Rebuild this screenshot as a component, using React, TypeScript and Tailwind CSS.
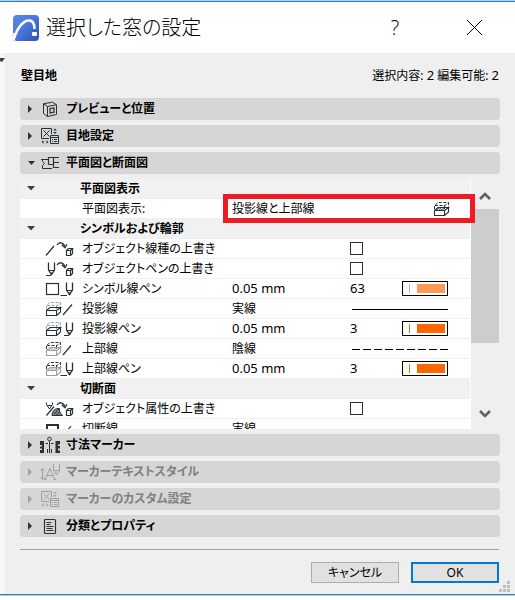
import React from 'react';
import clsx from 'clsx';

const INK = '#263238';
const FAINT = '#9aa0a3';

/* ---------- small glyphs shared by the row icons ---------- */

const Slash = ({ x = 0 }: { x?: number }) => (
  <path d={`M${x + 2} 14.5L${x + 10} 5`} stroke={INK} strokeWidth="1.2" />
);

const Pen = ({ x = 0, wide = false }: { x?: number; wide?: boolean }) => (
  <g transform={`translate(${x} 0)`} stroke={INK}>
    <path d="M4.5 1.5V9L7.5 13.5L10.5 9V1.5" strokeWidth="1.3" />
    <path d="M5 9.5H10" />
    <path d="M6.5 12.5H8.5" strokeWidth="2" />
    <path d={wide ? 'M-1.5 14.5H5' : 'M2 14.5H7'} />
  </g>
);

const ArrowToCube = () => (
  <g stroke={INK}>
    <path d="M13 4C15 .8 19.5 .8 20.8 5.5" strokeWidth="1.3" />
    <path d="M17.8 3.8L21 6.8L23 3.2" strokeWidth="1.3" />
    <path d="M22.5 9.5H26.5V14.5H22.5ZM22.5 9.5L24.5 7.5H28.5L26.5 9.5M28.5 7.5V12.5L26.5 14.5" strokeWidth="1.2" />
  </g>
);

const Box = ({ top, bottom, hatch = false }: { top: string; bottom: string; hatch?: boolean }) => (
  <g>
    <path d="M2.5 8V4.5L6 1.5H16.5V6" stroke={top} strokeDasharray="3 1.5" />
    <path d="M3 4.5H13L16.5 1.5M12.5 5V8" stroke={top} strokeDasharray="3 1.5" />
    <path d="M2.5 9.5H12.5V14.5H2.5ZM2.5 9.5L6 6.5H16.5L12.5 9.5M16.5 6.5V11L12.5 14.5" stroke={bottom} strokeWidth="1.1" />
    {hatch && <path d="M4.5 9L7.5 6.5L9.5 9L12 6.5M7 9L9 6.5M10.5 9L13 6.5" stroke={bottom} strokeWidth="0.8" />}
  </g>
);

type RowIconName =
  | 'lineOverride'
  | 'penOverride'
  | 'symbolPen'
  | 'projLine'
  | 'projPen'
  | 'overLine'
  | 'overPen'
  | 'cutOverride'
  | 'cutLine';

const ROW_ICONS: Record<RowIconName, React.ReactNode> = {
  lineOverride: <><Slash /><ArrowToCube /></>,
  penOverride: <><Pen /><ArrowToCube /></>,
  symbolPen: <><rect x="2.5" y="2.5" width="12" height="11" stroke={INK} strokeWidth="1.2" /><Pen x={18} wide /></>,
  projLine: <><Box top={FAINT} bottom={INK} /><path d="M19 14L28 3.5" stroke={INK} strokeWidth="1.2" /></>,
  projPen: <><Box top={FAINT} bottom={INK} /><Pen x={18} /></>,
  overLine: <><Box top={INK} bottom={FAINT} hatch /><path d="M19 14L27 4.5" stroke={INK} strokeWidth="1.2" /></>,
  overPen: <><Box top={INK} bottom={FAINT} hatch /><Pen x={18} wide /></>,
  cutOverride: (
    <>
      <path d="M2.5 1.5V3.5L5.5 8L8.5 3.5V1.5M3 4.5H8" stroke={INK} />
      <path d="M2.5 14.5L10 5.5" stroke={INK} strokeWidth="1.2" />
      <path d="M8 14.5C8 10 11 7 15.5 7.5C15 10 16 12 18.5 14.5Z" fill="#7c8386" stroke={INK} />
      <path d="M10 13L15 8M12.5 14L15.5 11" stroke={INK} />
      <ArrowToCube />
    </>
  ),
  cutLine: <><rect x="3" y="4" width="11" height="11" stroke={INK} strokeWidth="2" /><path d="M19 15L27 5" stroke={INK} strokeWidth="1.2" /></>,
};

const RowIcon = ({ name }: { name: RowIconName }) => (
  <svg width="30" height="16" viewBox="0 0 30 16" fill="none" className="ml-6 block" aria-hidden="true">
    {ROW_ICONS[name]}
  </svg>
);

/* ---------- panel header icons ---------- */

type PanelIconName = 'preview' | 'settings' | 'plan' | 'dimension' | 'textStyle' | 'document';

const PANEL_ICONS: Record<PanelIconName, React.ReactNode> = {
  preview: (
    <>
      <path d="M7.5 6.5L16.5 4.8V14.5L7.5 16.5ZM7.5 6.5L3.5 3.8L12.5 2.2L16.5 4.8M3.5 3.8V13.5L7.5 16.5" />
      <path d="M10 8.7L14 7.9V12.2L10 13.1Z" strokeWidth="1.2" />
    </>
  ),
  settings: (
    <>
      <path d="M9 11.5H1.5V1.5H11.5V7M3.5 3.5L9.5 9.5M9.5 3.5L3.5 9.5" />
      <path d="M10.5 8.5H18.5V16.5H10.5ZM10.5 10.5H18.5M12 12.5H13M14 12.5H17M12 14.5H13M14 14.5H17" />
      <path d="M13.2 3.5L15 1.5L16.8 3.5ZM13.2 5L15 7L16.8 5ZM3.5 13.2L1.5 15L3.5 16.8ZM6.5 13.2L8.5 15L6.5 16.8Z" fill="currentColor" stroke="none" />
    </>
  ),
  plan: (
    <>
      <path d="M1 5.500H8M2.500 5.500V7.500L4.500 9.500L2.500 11.500V14.500H12" />
      <path d="M8.500 10.500V3.500H19M8.500 10.500H13.500M13.500 3.500V13.500H19M13.500 8.500H19" strokeWidth="1.2" />
    </>
  ),
  dimension: (
    <>
      <path d="M0 5H4V17H0V14H2V12.5H0V10.5H2V9H0ZM20 5H15.5V17H20V14.5H18V12.5H20V10H18V8.5H20Z" fill="currentColor" stroke="none" />
      <circle cx="9.5" cy="3" r="1.8" />
      <path d="M9.5 5V17M5.5 7.5H8M11 7.5H13.5M7.5 13V17M11.5 13V17" />
    </>
  ),
  textStyle: (
    <>
      <path d="M2.5 6V16M0.5 7.5L2.5 5.5L4.5 7.5M0.5 14.5L2.5 16.5L4.5 14.5" />
      <path d="M5 16.5L10 5.5L15 16.5M7 12.5H13M4 16.5H6.5M13.5 16.5H16" />
      <path d="M13.5 1V7L16.5 12L19.5 7V1M14 7.5H19" />
    </>
  ),
  document: (
    <>
      <rect x="4.5" y="2.5" width="11" height="14" rx="1" strokeWidth="1.2" />
      <path d="M6.5 5.5H11.5M6.5 7.5H10.5M6.5 9.5H13.5M6.5 11.5H12.5M6.5 13.5H13.5" />
    </>
  ),
};

interface PanelHeaderProps {
  icon: PanelIconName;
  title: string;
  open?: boolean;
  disabled?: boolean;
}

const PanelHeader = ({ icon, title, open = false, disabled = false }: PanelHeaderProps) => (
  <button
    type="button"
    disabled={disabled}
    aria-expanded={open}
    className={clsx(
      'flex h-[22px] w-full items-center rounded-sm bg-[#d6d6d6] pl-2 text-left',
      disabled ? 'text-[#a0a0a0]' : 'text-[#263238]',
    )}
  >
    <svg width="7" height="8" viewBox="0 0 7 8" fill="currentColor" aria-hidden="true">
      {open ? <path d="M0 2H7L3.5 6Z" /> : <path d="M0 0L4 4L0 8Z" />}
    </svg>
    <svg
      width="20"
      height="18"
      viewBox="0 0 20 18"
      fill="none"
      stroke="currentColor"
      className="ml-[5px]"
      aria-hidden="true"
    >
      {PANEL_ICONS[icon]}
    </svg>
    <span className={clsx('ml-[6px] font-bold', disabled ? 'text-[#808080]' : 'text-black')}>{title}</span>
  </button>
);

/* ---------- property table ---------- */

type Row =
  | { kind: 'group'; label: string }
  | { kind: 'choice'; label: string; value: string }
  | { kind: 'check'; label: string; icon: RowIconName }
  | { kind: 'pen'; label: string; icon: RowIconName; value: string; pen: number }
  | { kind: 'line'; label: string; icon: RowIconName; value: string; dashed?: boolean };

const ROWS: Row[] = [
  { kind: 'group', label: '平面図表示' },
  { kind: 'choice', label: '平面図表示:', value: '投影線と上部線' },
  { kind: 'group', label: 'シンボルおよび輪郭' },
  { kind: 'check', label: 'オブジェクト線種の上書き', icon: 'lineOverride' },
  { kind: 'check', label: 'オブジェクトペンの上書き', icon: 'penOverride' },
  { kind: 'pen', label: 'シンボル線ペン', icon: 'symbolPen', value: '0.05 mm', pen: 63 },
  { kind: 'line', label: '投影線', icon: 'projLine', value: '実線' },
  { kind: 'pen', label: '投影線ペン', icon: 'projPen', value: '0.05 mm', pen: 3 },
  { kind: 'line', label: '上部線', icon: 'overLine', value: '陰線', dashed: true },
  { kind: 'pen', label: '上部線ペン', icon: 'overPen', value: '0.05 mm', pen: 3 },
  { kind: 'group', label: '切断面' },
  { kind: 'check', label: 'オブジェクト属性の上書き', icon: 'cutOverride' },
  { kind: 'line', label: '切断線', icon: 'cutLine', value: '実線' },
];

const Swatch = ({ light }: { light: boolean }) => (
  <div className="flex h-[15px] w-[46px] items-center border border-black bg-white pl-[6px]">
    <span className={clsx('h-[9px] w-px', light ? 'bg-[#ff9955]' : 'bg-[#ff6600]')} />
    <span className={clsx('ml-[7px] h-[9px] w-7', light ? 'bg-[#ff9955]' : 'bg-[#ff6600]')} />
  </div>
);

const PropertyRow = ({ row }: { row: Row }) => {
  const cell = 'h-5 border-b border-[#efefef] p-0 text-left align-middle font-normal whitespace-nowrap';

  if (row.kind === 'group') {
    return (
      <tr className="bg-[#f1f1f1]">
        <td className={cell}>
          <svg width="8" height="5" viewBox="0 0 8 5" className="ml-[7px] block" aria-hidden="true">
            <path d="M0 0H8L4 4.5Z" fill="#404040" />
          </svg>
        </td>
        <th colSpan={4} scope="colgroup" className="h-5 border-b border-[#efefef] p-0 text-left align-middle font-bold">
          {row.label}
        </th>
      </tr>
    );
  }

  return (
    <tr>
      <td className={cell}>{'icon' in row && <RowIcon name={row.icon} />}</td>
      <th scope="row" className={clsx(cell, 'pl-[2px]')}>{row.label}</th>
      <td className={cell}>
        {row.kind === 'pen' ? <span className="text-[13px]">{row.value}</span> : 'value' in row && row.value}
      </td>
      {row.kind === 'check' && (
        <td className={cell} colSpan={2}>
          <input
            type="checkbox"
            aria-label={row.label}
            className="block size-[13px] appearance-none border border-[#263238] bg-white checked:bg-[#263238]"
          />
        </td>
      )}
      {row.kind === 'choice' && (
        <td className={cell} colSpan={2}>
          <svg width="18" height="16" viewBox="0 0 18 16" fill="none" className="mr-[20px] ml-auto block" aria-hidden="true">
            <Box top={INK} bottom={INK} hatch />
          </svg>
        </td>
      )}
      {row.kind === 'line' && (
        <td className={cell} colSpan={2}>
          <svg width="96" height="5" viewBox="0 0 96 5" className="ml-[2px] block" aria-hidden="true">
            <path d="M0 3.5H96" stroke="#000" strokeDasharray={row.dashed ? '8 3' : undefined} />
          </svg>
        </td>
      )}
      {row.kind === 'pen' && (
        <>
          <td className={cell}>
            <span className="text-[13px]">{row.pen}</span>
          </td>
          <td className={cell}>
            <Swatch light={row.pen === 63} />
          </td>
        </>
      )}
    </tr>
  );
};

const PropertyPanel = () => (
  <div className="relative mt-[5px] flex h-[250px]">
    <div className="grow overflow-hidden border-r border-white bg-white">
      <table className="w-full table-fixed border-separate border-spacing-0">
        <colgroup>
          <col className="w-[60px]" />
          <col className="w-[152px]" />
          <col />
          <col className="w-[52px]" />
          <col className="w-[68px]" />
        </colgroup>
        <tbody>
          {ROWS.map((row, i) => (
            <PropertyRow key={i} row={row} />
          ))}
        </tbody>
      </table>
    </div>

    {/* Scroll bar */}
    <div className="flex w-[29px] shrink-0 flex-col pr-px">
      <button type="button" aria-label="上へスクロール" className="flex h-[30px] items-center justify-center pt-1">
        <svg width="12" height="10" viewBox="0 0 12 10" fill="none" aria-hidden="true">
          <path d="M1 8L6 3L11 8" stroke="#606060" strokeWidth="2.6" />
        </svg>
      </button>
      <div className="grow">
        <div className="h-[134px] bg-[#cdcdcd]" />
      </div>
      <button type="button" aria-label="下へスクロール" className="flex h-[30px] items-center justify-center">
        <svg width="12" height="10" viewBox="0 0 12 10" fill="none" aria-hidden="true">
          <path d="M1 2L6 7L11 2" stroke="#606060" strokeWidth="2.6" />
        </svg>
      </button>
    </div>

    {/* Red callout round the display option */}
    <div className="pointer-events-none absolute top-[15px] right-[25px] left-[203px] h-[29px] border-5 border-[#ed1c24]" />
  </div>
);

/* ---------- dialog ---------- */

const AppLogo = () => (
  <svg width="28" height="28" viewBox="0 0 28 28" className="block" aria-hidden="true">
    <defs>
      <linearGradient id="logo" x1="0" y1="0" x2="1" y2="1">
        <stop offset="0" stopColor="#5d8ae2" />
        <stop offset="0.5" stopColor="#4a74dc" />
        <stop offset="1" stopColor="#2c4fae" />
      </linearGradient>
    </defs>
    <rect x="1" y="1" width="26" height="26" rx="4" fill="url(#logo)" />
    <path d="M0 19H4L1.500 28H0Z" fill="#e6ebf6" />
    <path d="M1.500 26C5 14 11 6.500 17 6.500C21 6.500 22.500 9 22.500 15" fill="none" stroke="#fff" strokeWidth="2.6" />
    <rect x="20" y="18" width="5" height="4" rx="1" fill="#fff" />
  </svg>
);

const TitleBar = () => (
  <header className="flex h-[51px] items-center bg-white pl-3">
    <AppLogo />
    <h1 className="ml-[6px] grow text-[20px] leading-7 font-light">選択した窓の設定</h1>
    <button type="button" aria-label="ヘルプ" className="mr-[2px] w-10 text-center font-['Open_Sans',sans-serif] text-xl leading-7 font-light">
      ?
    </button>
    <button type="button" aria-label="閉じる" className="mr-8 ml-[49px]">
      <svg width="17" height="17" viewBox="0 0 17 17" className="block" aria-hidden="true">
        <path d="M1 1L16 16M16 1L1 16" stroke="#000" />
      </svg>
    </button>
  </header>
);

const SizeGrip = () => (
  <svg width="11" height="11" viewBox="0 0 11 11" fill="#bfbfbf" className="absolute right-[5px] bottom-[2px]" aria-hidden="true">
    <path d="M8 0h3v3H8zM8 4h3v3H8zM4 4h3v3H4zM8 8h3v3H8zM4 8h3v3H4zM0 8h3v3H0z" />
  </svg>
);

const App = () => (
  <div className="bg-white font-['Noto_Sans','Noto_Sans_CJK_JP',sans-serif] text-xs leading-4 text-black [font-feature-settings:'palt']">
    <div className="border-y border-[#c9c9c9]">
      <div className="border-y border-[#1883d7]">
        <TitleBar />
        <div className="flex">
          {/* Sliver of the window behind */}
          <div className="w-[5px] shrink-0 bg-[#f7f7f7] pt-[5px]">
            <svg width="5" height="4" viewBox="0 0 5 4" className="block" aria-hidden="true">
              <path d="M0 0H5L2 4L0 3Z" fill="#404040" />
            </svg>
          </div>

          <main className="relative grow bg-[#efefef] px-[15px] pt-[14px] pb-[11px]">
            <div className="flex items-center justify-between px-px">
              <h2 className="font-bold">壁目地</h2>
              <p>
                選択内容: <span className="text-[13px]">2</span> 編集可能: <span className="text-[13px]">2</span>
              </p>
            </div>

            <div className="mt-[14px] flex flex-col gap-[5px]">
              <PanelHeader icon="preview" title="プレビューと位置" />
              <PanelHeader icon="settings" title="目地設定" />
              <PanelHeader icon="plan" title="平面図と断面図" open />
            </div>
            <PropertyPanel />
            <div className="mt-[5px] flex flex-col gap-[5px]">
              <PanelHeader icon="dimension" title="寸法マーカー" />
              <PanelHeader icon="textStyle" title="マーカーテキストスタイル" disabled />
              <PanelHeader icon="settings" title="マーカーのカスタム設定" disabled />
              <PanelHeader icon="document" title="分類とプロパティ" />
            </div>

            <hr className="mt-3 mr-px border-[#a0a0a0]" />
            <div className="mt-3 mr-px flex justify-end gap-3">
              <button type="button" className="h-[21px] w-[88px] border border-[#adadad] bg-[#e1e1e1]">
                キャンセル
              </button>
              <button type="button" className="h-[21px] w-[88px] border-2 border-[#0078d7] bg-[#e1e1e1] leading-none">
                OK
              </button>
            </div>
            <SizeGrip />
          </main>
        </div>
      </div>
    </div>
  </div>
);

export default App;
